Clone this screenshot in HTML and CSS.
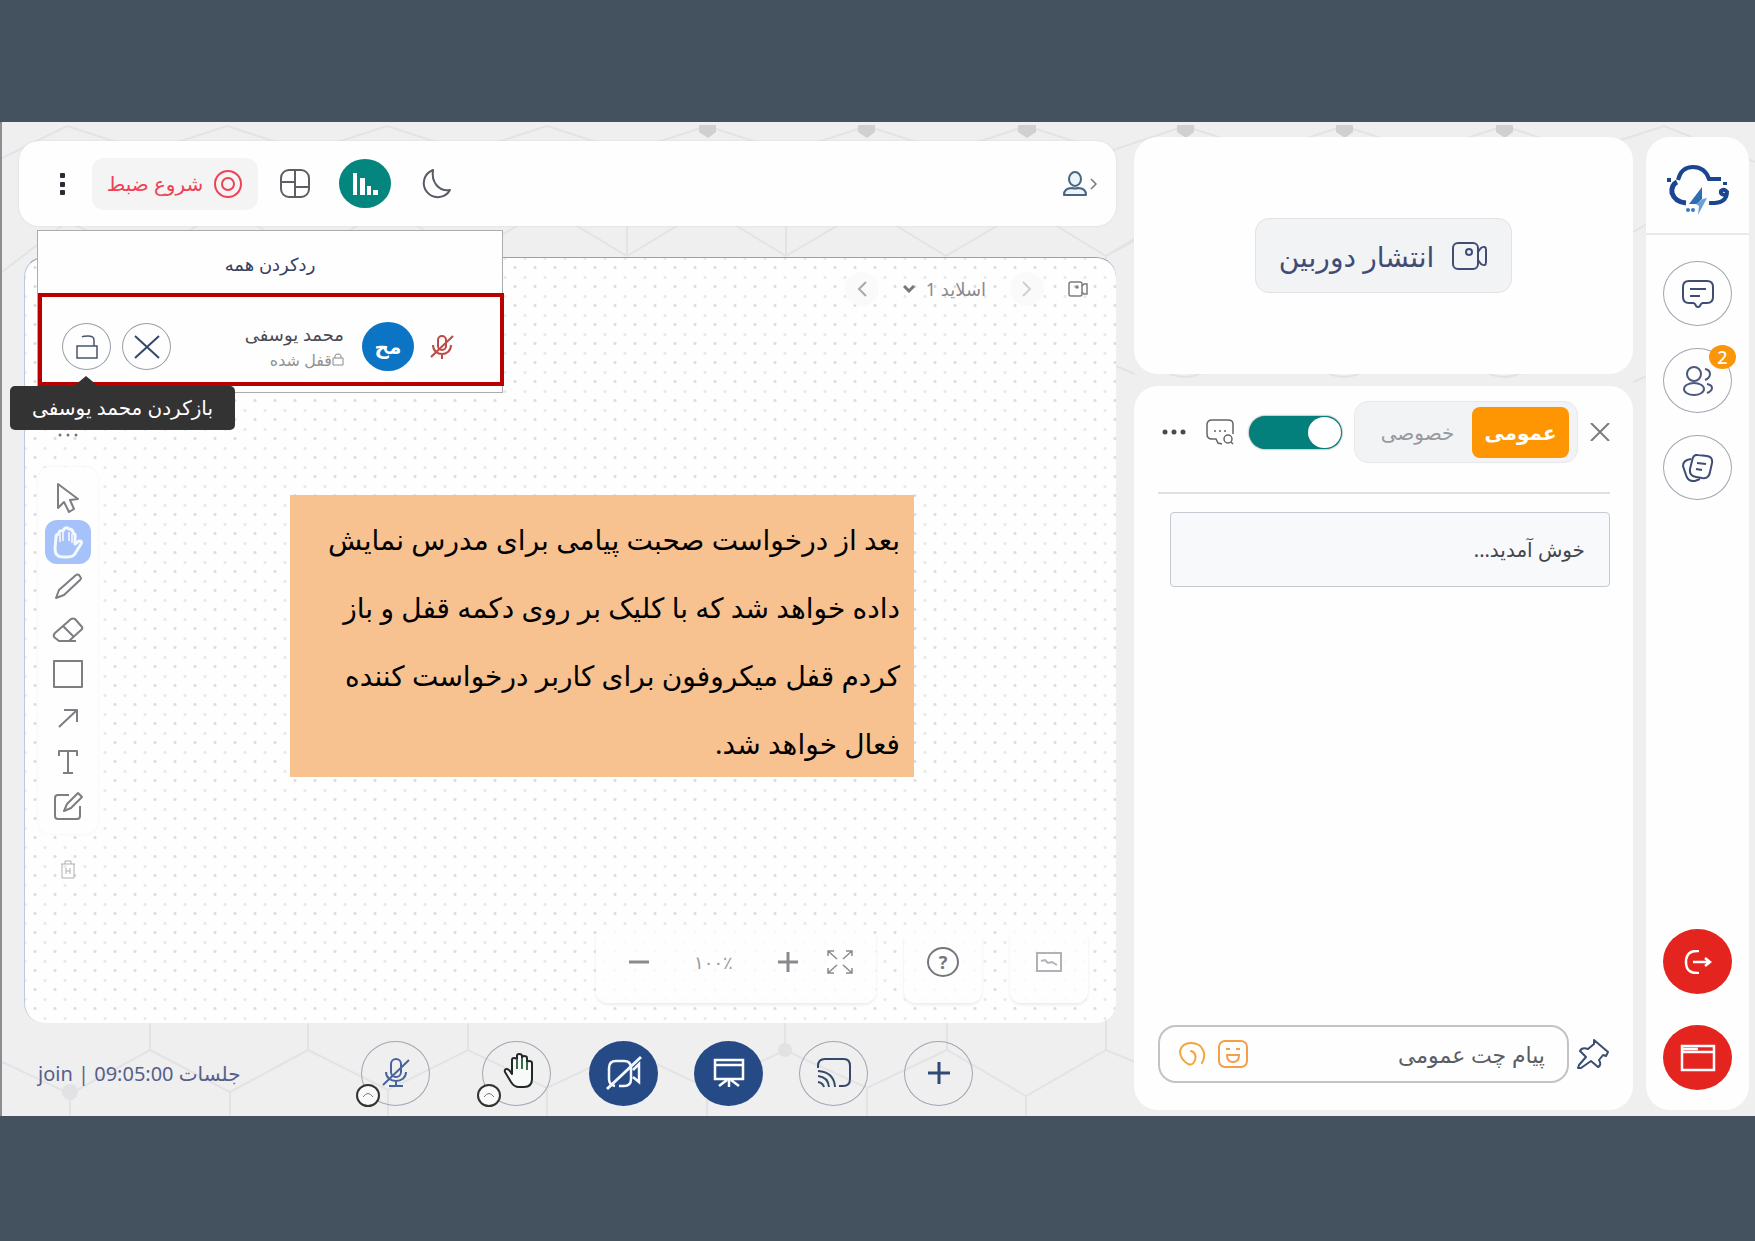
FILE: index.html
```html
<!DOCTYPE html>
<html lang="fa">
  <head>
    <meta charset="UTF-8" />
    <meta name="viewport" content="width=device-width, initial-scale=1.0" />
    <title>جلسات</title>
    <link rel="stylesheet" href="styles.css" />
  </head>
  <body>
    <div class="stage">
      <!-- hexagon backdrop -->
      <svg class="backdrop" viewBox="0 0 1753 994" preserveAspectRatio="none" aria-hidden="true">
        <path d="M0 36L65 4L145 30L225 4L305 30L385 4L465 30L545 4L625 30L705 4L785 30L865 4L945 30L1025 4L1105 30L1183 4L1262 30L1342 4L1422 30L1502 4L1582 30L1662 4L1753 40" />
        <path d="M0 150L65 100L145 134L225 86L305 134L385 86L465 134L545 86L625 134L705 86L784 134L865 86L944 134L1025 86L1104 134L1183 86M625 100V134M784 100V134M1104 134L1133 118M1104 240L1133 252M1104 134V240" />
        <path d="M0 940L68 972L148 928L228 970L306 928L386 968L466 928L545 966L625 928L705 966L783 928L865 966L945 928L1024 974L1104 928L1133 940M148 890V928M306 890V928M466 890V928M783 890V928M945 890V928M1104 870V928M68 972V994M228 970V994M386 968V994M545 966V994M705 966V994M865 966V994M1024 974V994" />
        <path d="M1133 220Q1183 290 1232 220M1292 220Q1342 290 1392 220M1452 220Q1502 290 1552 220M1631 110L1645 102M1631 260L1645 254" />
        <g class="nodes">
          <path d="M697 3h17v7l-8 6l-9-6zM856 3h17v7l-8 6l-9-6zM1016 3h18v7l-9 6l-9-6zM1175 3h17v7l-8 6l-9-6zM1334 3h17v7l-8 6l-9-6zM1494 3h17v7l-8 6l-9-6z" />
        </g>
        <g class="nodes pale">
          <circle cx="68" cy="970" r="8" />
          <circle cx="783" cy="928" r="7" />
        </g>
      </svg>

      <main class="main">
        <header class="topbar">
          <button class="icon-btn more-btn" aria-label="بیشتر">
            <svg width="8" height="24" viewBox="0 0 8 24" fill="#2b2b33">
              <rect x="2" y="1" width="5" height="5" rx="1" /><rect x="2" y="10" width="5" height="5" rx="1" /><rect x="2" y="18" width="5" height="5" rx="1" />
            </svg>
          </button>
          <button class="record-btn">
            <span>شروع ضبط</span>
            <svg width="30" height="30" viewBox="0 0 30 30" fill="none" stroke="#ee4256" stroke-width="2">
              <circle cx="15" cy="15" r="13" /><circle cx="15" cy="15" r="6" />
            </svg>
          </button>
          <button class="icon-btn layout-btn" aria-label="چیدمان">
            <svg width="32" height="30" viewBox="0 0 32 30" fill="none" stroke="#5d5f65" stroke-width="2">
              <rect x="2" y="1" width="28" height="27" rx="8" /><path d="M16 1V28M2 13H16M16 18H30" />
            </svg>
          </button>
          <button class="stats-btn" aria-label="آمار">
            <svg width="28" height="24" viewBox="0 0 28 24" fill="#fff">
              <rect x="2" y="1" width="4" height="22" /><rect x="9" y="6" width="5" height="17" /><rect x="16" y="14" width="4" height="9" /><rect x="22" y="18" width="5" height="5" />
            </svg>
          </button>
          <button class="icon-btn moon-btn" aria-label="حالت شب">
            <svg width="32" height="32" viewBox="0 0 32 32" fill="none" stroke="#575b64" stroke-width="2" stroke-linejoin="round">
              <path d="M13 2A14 14 0 1 0 30 22C19 24 11 14 13 2z" />
            </svg>
          </button>
          <button class="icon-btn user-btn" aria-label="کاربر">
            <svg width="36" height="28" viewBox="0 0 36 28" fill="none" stroke="#496582" stroke-width="2" stroke-linejoin="round">
              <ellipse cx="13" cy="9" rx="6" ry="7" fill="#edf5fc" />
              <path d="M2 25c0-5 3-7 8-7q3 1 6 0c5 0 8 2 8 7z" fill="#edf5fc" />
              <path d="M29 9l5 5l-5 5" stroke="#777" stroke-width="1.5" />
            </svg>
          </button>

          <!-- raise hand requests -->
          <div class="requests">
            <button class="reject-all">ردکردن همه</button>
            <div class="request-row">
              <button class="round-small" aria-label="بازکردن محمد یوسفی">
                <svg width="24" height="26" viewBox="0 0 24 26" fill="none" stroke="#4a5568" stroke-width="1.5">
                  <path d="M2 12h20v12H2zM19 12V6c0-3-2-4-6-4c-3 0-5 0-6 1" />
                </svg>
              </button>
              <button class="round-small" aria-label="رد">
                <svg width="26" height="24" viewBox="0 0 26 24" fill="none" stroke="#35456b" stroke-width="2">
                  <path d="M1 1L25 23M25 1L1 23" />
                </svg>
              </button>
              <div class="request-user">
                <span class="request-name">محمد یوسفی</span>
                <span class="request-state">
                  <svg width="12" height="13" viewBox="0 0 12 13" fill="none" stroke="#8a8a8a">
                    <path d="M1 5h10v7H1zM3 5V3q0-2 3-2t3 2v2" />
                  </svg>قفل شده</span>
              </div>
              <span class="avatar">مح</span>
              <svg class="muted-mic" width="24" height="26" viewBox="0 0 24 26" fill="none" stroke="#bd4a45" stroke-width="2">
                <rect x="8" y="2" width="8" height="14" rx="4" /><path d="M3 11c0 12 18 12 18 0M12 20v5M23 2L1 23" />
              </svg>
            </div>
            <div class="tooltip" role="tooltip">بازکردن محمد یوسفی</div>
          </div>
        </header>

        <section class="board">
          <div class="tools">
            <svg class="tool-dots" width="20" height="4" viewBox="0 0 20 4" fill="#777">
              <circle cx="2" cy="2" r="1.5" /><circle cx="10" cy="2" r="1.5" /><circle cx="18" cy="2" r="1.5" />
            </svg>
            <div class="tool-list">
              <button class="tool" aria-label="انتخاب">
                <svg width="30" height="32" viewBox="0 0 30 32"><path d="M5 2V26L11 20L16 30L21 27L17 18L25 17z" /></svg>
              </button>
              <button class="tool active" aria-label="جابجایی">
                <svg width="34" height="34" viewBox="0 0 34 34">
                  <path d="M5 12Q5 9 8 9V8Q8 5 12 6Q14 1 18 4Q22 4 22 8Q25 9 24 13V19L28 16Q32 16 30 19L25 27Q23 32 17 32H12Q4 32 4 24z" />
                  <path class="finger" d="M9 9V17M12 7V16M18 7V16M21 9V18" />
                </svg>
              </button>
              <button class="tool" aria-label="مداد">
                <svg width="30" height="30" viewBox="0 0 30 30"><path d="M3 27L6 19L23 4Q24 3 26 4L28 7Q28 8 27 9L11 24z" /></svg>
              </button>
              <button class="tool" aria-label="پاک کن">
                <svg width="34" height="30" viewBox="0 0 34 30"><path d="M25 26H8L3 22Q2 20 4 18L20 4Q22 3 24 4L31 12Q32 14 30 15L18 26M12 11L22 21" /></svg>
              </button>
              <button class="tool" aria-label="مستطیل">
                <svg width="32" height="30" viewBox="0 0 32 30"><path d="M2 2H30V28H2z" /></svg>
              </button>
              <button class="tool" aria-label="فلش">
                <svg width="26" height="26" viewBox="0 0 26 26"><path d="M4 22L22 5M9 5H22V17" /></svg>
              </button>
              <button class="tool" aria-label="متن">
                <svg width="26" height="28" viewBox="0 0 26 28"><path d="M4 8V3H22V8M13 3V25M8 25H18" /></svg>
              </button>
              <button class="tool" aria-label="یادداشت">
                <svg width="32" height="32" viewBox="0 0 32 32"><path d="M17 5H6Q3 5 3 8V26Q3 29 6 29H25Q28 29 28 26V16M12 21L15 14L26 3L30 7L19 18z" /></svg>
              </button>
            </div>
            <button class="tool trash" aria-label="حذف">
              <svg width="16" height="20" viewBox="0 0 16 20"><path d="M1 4H15M5 4V1H11V4M2 4V18H14V4M6 8V14M10 8V14M6 11H10" /></svg>
            </button>
          </div>

          <div class="board-side">
            <div class="slide-nav">
              <button class="icon-btn slide-arrow" aria-label="اسلاید قبلی">
                <svg width="10" height="16" viewBox="0 0 10 16" fill="none" stroke="#a9a9ad" stroke-width="2"><path d="M9 1L2 8L9 15" /></svg>
              </button>
              <label class="slide-pick">
                <svg width="12" height="8" viewBox="0 0 12 8" fill="none" stroke="#777" stroke-width="3"><path d="M1 1L6 6L11 1" /></svg>
                <select aria-label="اسلاید"><option>اسلاید 1</option></select>
              </label>
              <button class="icon-btn slide-arrow" aria-label="اسلاید بعدی">
                <svg width="10" height="16" viewBox="0 0 10 16" fill="none" stroke="#cfcfd3" stroke-width="2"><path d="M1 1L8 8L1 15" /></svg>
              </button>
              <button class="icon-btn" aria-label="دوربین">
                <svg width="20" height="16" viewBox="0 0 20 16" fill="none" stroke="#7c7c80" stroke-width="1.5">
                  <rect x="1" y="1" width="13" height="14" rx="2" /><path d="M14 5L16 3H19V13H16L14 11" /><circle cx="9" cy="6" r="1" />
                </svg>
              </button>
            </div>

            <div class="board-bottom">
              <div class="float-card zoom-card">
                <button class="icon-btn" aria-label="کوچک نمایی">
                  <svg width="22" height="20" viewBox="0 0 22 20" stroke="#8a8a8e" stroke-width="3"><path d="M1 10H21" /></svg>
                </button>
                <span class="zoom-value">۱۰۰٪</span>
                <button class="icon-btn" aria-label="بزرگ نمایی">
                  <svg width="22" height="20" viewBox="0 0 22 20" stroke="#8a8a8e" stroke-width="3"><path d="M1 10H21M11 0V20" /></svg>
                </button>
                <button class="icon-btn" aria-label="تمام صفحه">
                  <svg width="26" height="24" viewBox="0 0 26 24" fill="none" stroke="#8a8a8e" stroke-width="1.5">
                    <path d="M1 6V1H7M1 1L10 9M19 1H25V6M25 1L16 9M1 18V23H7M1 23L10 15M19 23H25V18M25 23L16 15" />
                  </svg>
                </button>
              </div>
              <button class="float-card" aria-label="راهنما"><span class="help-mark">?</span></button>
              <button class="float-card" aria-label="نقشه">
                <svg width="26" height="20" viewBox="0 0 26 20" fill="none" stroke="#b2b2b6" stroke-width="2"><path d="M1 1H25V19H1zM5 9L9 8L12 11L16 10L21 13" /></svg>
              </button>
            </div>
          </div>

          <p class="note" dir="rtl">
            بعد از درخواست صحبت پیامی برای مدرس نمایش<br />
            داده خواهد شد که با کلیک بر روی دکمه قفل و باز<br />
            کردم قفل میکروفون برای کاربر درخواست کننده<br />
            فعال خواهد شد.
          </p>
        </section>

        <footer class="bottombar">
          <span class="session" dir="ltr">join | 09:05:00 جلسات</span>
          <div class="actions">
            <span class="action-wrap">
              <button class="round" aria-label="میکروفون">
                <svg width="28" height="32" viewBox="0 0 28 32" fill="none" stroke="#46649b" stroke-width="2">
                  <rect x="9" y="2" width="10" height="18" rx="5" /><path d="M4 15c0 12 20 12 20 0M14 24v5M7 29h14M27 3L1 28" />
                </svg>
              </button>
              <button class="expand" aria-label="انتخاب میکروفون"><svg width="12" height="6" viewBox="0 0 12 6" fill="none" stroke="#777"><path d="M1 5Q6-2 11 5" /></svg></button>
            </span>
            <span class="action-wrap">
              <button class="round hand-btn" aria-label="بلند کردن دست">
                <svg width="34" height="36" viewBox="0 0 34 36" fill="#f8faf8" stroke="#22282a" stroke-width="2" stroke-linejoin="round">
                  <path d="M9 20V8q0-2 2-2q3 0 3 2V4q0-2 2-2q3 0 3 2v2q0-2 2-2q3 0 3 2v5q0-2 2-2q3 0 3 2v16q0 8-8 8h-5q-5 0-8-5L2 20q-1-3 2-3q2 0 5 5z" />
                  <path d="M14 7v10M19 6v11M24 10v8" stroke="#3c6a48" />
                </svg>
              </button>
              <button class="expand" aria-label="گزینه های دست"><svg width="12" height="6" viewBox="0 0 12 6" fill="none" stroke="#777"><path d="M1 5Q6-2 11 5" /></svg></button>
            </span>
            <button class="round filled" aria-label="دوربین خاموش">
              <svg width="36" height="36" viewBox="0 0 36 36" fill="none" stroke="#f5f8ff" stroke-width="3">
                <path d="M9 31Q3 30 3 24V13Q3 6 10 6H18Q25 6 25 13V24Q25 31 18 31H13M27 15L33 9V27L27 22" stroke-width="2.5" /><path d="M1 34L35 2" />
              </svg>
            </button>
            <button class="round filled" aria-label="ارائه">
              <svg width="32" height="30" viewBox="0 0 32 30" fill="none" stroke="#fff" stroke-width="2.5">
                <path d="M2 2H30V21H2zM2 7H30M16 21V29M14 22L6 28M18 22L26 28" />
              </svg>
            </button>
            <button class="round" aria-label="اشتراک صفحه">
              <svg width="36" height="32" viewBox="0 0 36 32" fill="none" stroke="#37496b" stroke-width="2">
                <path d="M2 11V9Q2 2 9 2H28Q34 2 34 9V22Q34 29 27 29H23M2 14Q18 15 19 30M2 19Q12 20 13 30M2 25Q7 26 8 30" />
              </svg>
            </button>
            <button class="round" aria-label="افزودن">
              <svg width="24" height="22" viewBox="0 0 24 22" stroke="#2f4a77" stroke-width="3"><path d="M1 11H23M12 0V22" /></svg>
            </button>
          </div>
        </footer>
      </main>

      <aside class="panels">
        <section class="card camera-card">
          <button class="camera-btn">
            <span>انتشار دوربین</span>
            <svg width="36" height="30" viewBox="0 0 36 30" fill="none" stroke="#414c74" stroke-width="2">
              <rect x="1" y="2" width="25" height="26" rx="5" /><path d="M26 11L29 7Q34 4 34 9V21Q34 26 29 23L26 19" /><circle cx="17" cy="11" r="3" />
            </svg>
          </button>
        </section>

        <section class="card chat-card">
          <div class="chat-head">
            <button class="icon-btn" aria-label="گزینه ها">
              <svg width="24" height="6" viewBox="0 0 24 6" fill="#4a4a50"><circle cx="3" cy="3" r="2.5" /><circle cx="12" cy="3" r="2.5" /><circle cx="21" cy="3" r="2.5" /></svg>
            </button>
            <button class="icon-btn search-btn" aria-label="جستجو">
              <svg width="28" height="26" viewBox="0 0 28 26" fill="none" stroke="#64646b" stroke-width="1.5">
                <path d="M27 15V5Q27 1 22 1H6Q1 1 1 6V15Q1 20 6 20H10L12 24L16 25M8 12H10M13 12H15M18 12H20" /><circle cx="22" cy="20" r="4" /><path d="M25 23L27 25" />
              </svg>
            </button>
            <input class="toggle" type="checkbox" checked aria-label="فعال بودن چت" />
            <div class="tabs">
              <button class="tab">خصوصی</button>
              <button class="tab selected">عمومی</button>
            </div>
            <button class="icon-btn close-btn" aria-label="بستن">
              <svg width="20" height="18" viewBox="0 0 20 18" stroke="#7b7b82" stroke-width="2"><path d="M1 0L19 18M19 0L1 18" /></svg>
            </button>
          </div>
          <p class="message" dir="rtl">خوش آمدید...</p>
          <div class="composer">
            <div class="composer-box">
              <button class="icon-btn" aria-label="پیوست">
                <svg width="28" height="26" viewBox="0 0 28 26" fill="none" stroke="#f3a53c" stroke-width="2" stroke-linecap="round">
                  <path d="M13 10Q19 12 17 19Q15 25 10 23Q2 18 2 10Q4 2 13 2Q22 2 25 9Q28 15 24 22" />
                </svg>
              </button>
              <button class="icon-btn" aria-label="ایموجی">
                <svg width="30" height="28" viewBox="0 0 30 28" fill="none" stroke="#f3a048" stroke-width="2">
                  <rect x="1" y="1" width="28" height="26" rx="6" /><path d="M8 9h4M18 9h4M9 15H21Q21 22 15 22T9 15z" />
                </svg>
              </button>
              <input class="chat-input" type="text" dir="rtl" placeholder="پیام چت عمومی" aria-label="پیام چت عمومی" />
            </div>
            <button class="icon-btn" aria-label="سنجاق">
              <svg width="34" height="32" viewBox="0 0 34 32" fill="none" stroke="#3c4d73" stroke-width="2" stroke-linejoin="round">
                <path d="M18 2L32 14L30 18L27 17L23 22Q26 27 22 29L15 23L5 30L2 30L3 27L10 19L4 13Q6 9 12 11L18 6z" />
              </svg>
            </button>
          </div>
        </section>
      </aside>

      <nav class="card sidebar">
        <a class="logo" href="#" aria-label="خانه">
          <svg width="64" height="54" viewBox="0 0 64 54" fill="none">
            <path d="M12 18Q15 5 27 5Q39 5 43 17L55 17" stroke="#1c4591" stroke-width="4" />
            <path d="M11 20Q5 23 6 31Q9 40 20 41" stroke="#1c4591" stroke-width="5" />
            <path d="M43 41Q61 42 61 30Q58 26 55 29Q54 33 60 33" stroke="#1c4591" stroke-width="4" />
            <path d="M1 16h4v4H1zM57 20h4v3H57z" fill="#1c4591" />
            <path d="M36 25L23 42H31L36 37z" fill="#2d6db4" />
            <path d="M37 37L30 42L33 44L32 53L41 36z" fill="#67a2d6" />
            <circle cx="22" cy="48" r="2" fill="#397bc0" /><circle cx="27" cy="48" r="2" fill="#397bc0" />
          </svg>
        </a>
        <div class="side-group">
          <button class="round" aria-label="چت">
            <svg width="32" height="30" viewBox="0 0 32 30" fill="none" stroke="#3f4d75" stroke-width="2">
              <path d="M7 2H25Q31 2 31 8V18Q31 24 25 24H21Q19 24 18 27Q16 29 14 27Q13 24 11 24H7Q1 24 1 18V8Q1 2 7 2zM8 10H24M8 17H18" />
            </svg>
          </button>
          <button class="round" aria-label="کاربران">
            <svg width="32" height="30" viewBox="0 0 32 30" fill="none" stroke="#4c587c" stroke-width="2">
              <circle cx="12" cy="8" r="7" /><ellipse cx="12" cy="23" rx="10" ry="6" /><path d="M23 3Q28 4 28 8T23 14M25 18Q30 19 30 22T25 27" />
            </svg>
            <span class="badge">2</span>
          </button>
          <button class="round" aria-label="فایل ها">
            <svg width="32" height="28" viewBox="0 0 32 28" fill="none" stroke="#3f4d75" stroke-width="2">
              <path d="M16 1L25 2Q31 3 30 9L28 18Q27 25 20 24L14 23Q7 22 8 15L10 7Q11 0 16 1zM9 5Q1 6 1 12L4 21Q6 28 13 27L18 25M15 9L24 10M14 15L20 16" />
            </svg>
          </button>
        </div>
        <div class="side-group side-exit">
          <button class="round danger" aria-label="خروج">
            <svg width="28" height="24" viewBox="0 0 28 24" fill="none" stroke="#fff" stroke-width="2.5"><path d="M15 1Q2 0 2 12T15 23M9 12H26M21 8L26 12L21 16" /></svg>
          </button>
          <button class="round danger" aria-label="پنجره">
            <svg width="36" height="28" viewBox="0 0 36 28" fill="none" stroke="#fff" stroke-width="2.5"><path d="M2 2H34V26H2zM2 8H34M2 5H18" /></svg>
          </button>
        </div>
      </nav>
    </div>
  </body>
</html>
```
FILE: styles.css
```css
* {
  box-sizing: border-box;
  margin: 0;
  font-family: "Noto Sans", "DejaVu Sans", sans-serif;
}
body {
  display: flex;
  flex-direction: column;
  min-height: 100vh;
  padding: 122px 0 125px;
  background-color: #44525f;
}
button {
  display: flex;
  align-items: center;
  justify-content: center;
  padding: 0;
  border: none;
  background: none;
  cursor: pointer;
}
svg {
  display: block;
  flex: none;
}
.stage {
  position: relative;
  display: flex;
  flex: 1;
  padding: 15px 6px 6px 17px;
  border-left: 2px solid #8b8d93;
  background-color: #efeff0;
}
.backdrop {
  position: absolute;
  top: 0;
  left: 0;
  width: 100%;
  height: 100%;
  fill: none;
  stroke: #e3e3e5;
  stroke-width: 2;
}
.nodes {
  fill: #d0d0d2;
  stroke: none;
}
.nodes.pale {
  fill: #e2e2e4;
}
.card {
  position: relative;
  background-color: #fefefe;
  border-radius: 24px;
}

/* main column */
.main {
  position: relative;
  display: flex;
  flex: 1;
  flex-direction: column;
  padding-top: 4px;
}
.topbar {
  position: relative;
  z-index: 2;
  display: flex;
  align-items: center;
  height: 85px;
  padding: 0 18px 0 39px;
  border-radius: 20px;
  background-color: #fefefe;
  box-shadow: 0 0 2px #d5d5d5;
}
.record-btn {
  gap: 10px;
  min-width: 166px;
  height: 52px;
  margin-left: 26px;
  border-radius: 12px;
  background-color: #f4f4f4;
  color: #ee4256;
  font-size: 20px;
}
.layout-btn {
  margin-left: 21px;
}
.stats-btn {
  width: 52px;
  height: 49px;
  margin-left: 28px;
  border-radius: 50%;
  background-color: #04857d;
}
.moon-btn {
  margin-left: 29px;
}
.user-btn {
  margin-left: auto;
}

/* requests menu */
.requests {
  position: absolute;
  top: 89px;
  left: 18px;
  width: 466px;
  padding-bottom: 6px;
  border: 1px solid #a9adb0;
  background-color: #fefefe;
}
.reject-all {
  width: 100%;
  height: 62px;
  padding-top: 4px;
  color: #3a3f5c;
  font-size: 18px;
}
.request-row {
  display: flex;
  align-items: center;
  height: 93px;
  margin-right: -2px;
  padding: 14px 46px 0 20px;
  border: 4px solid #b90000;
}
.round-small {
  width: 49px;
  height: 47px;
  margin-right: 11px;
  border: 1px solid #9a9fa6;
  border-radius: 50%;
}
.request-user {
  display: flex;
  flex: 1;
  flex-direction: column;
  align-items: flex-end;
  gap: 2px;
}
.request-name {
  color: #4a4a55;
  font-size: 18px;
  line-height: 24px;
}
.request-state {
  display: flex;
  flex-direction: row-reverse;
  align-items: center;
  color: #929292;
  font-size: 16px;
  line-height: 24px;
}
.avatar {
  display: flex;
  align-items: center;
  justify-content: center;
  width: 52px;
  height: 49px;
  margin: 0 16px 0 18px;
  border-radius: 50%;
  background-color: #0b74c4;
  color: #fff;
  font-size: 20px;
  font-weight: bold;
}
.tooltip {
  position: absolute;
  top: 155px;
  left: -28px;
  width: 225px;
  padding: 6px 0;
  border-radius: 5px;
  background-color: #333;
  color: #fff;
  font-size: 20px;
  font-weight: 500;
  line-height: 32px;
  text-align: center;
  white-space: nowrap;
}
.tooltip::before {
  content: "";
  position: absolute;
  top: -10px;
  left: 64px;
  border: 12px solid transparent;
  border-top: none;
  border-bottom: 10px solid #333;
}

/* white board */
.board {
  position: relative;
  display: flex;
  flex: 1;
  margin: 31px 0 0 5px;
  border-top: 1px solid #8da3b6;
  border-left: 1px solid #b9cbe0;
  border-radius: 20px;
  background-color: #fefefe;
  background-image: radial-gradient(circle, #dcdcdf 1px, transparent 2px),
    radial-gradient(circle, #e8e8ea 1px, transparent 2px);
  background-position: 0 0, 10px 10px;
  background-size: 20px 19px;
}
.tools {
  display: flex;
  flex-direction: column;
  align-items: center;
  width: 62px;
  margin-left: 12px;
  padding-top: 175px;
}
.tool-list {
  margin-top: 30px;
  padding: 9px 7px 6px;
  border-radius: 12px;
  background-color: #fefefe;
  box-shadow: 0 0 2px #ececee;
}
.tool {
  width: 46px;
  height: 44px;
}
.tool svg {
  fill: none;
  stroke: #7d7d82;
  stroke-width: 2;
  stroke-linejoin: round;
}
.tool.active {
  border-radius: 12px;
  background-color: #a5c3fa;
}
.tool.active svg {
  stroke: #f4f8ff;
  stroke-width: 3;
}
.tool.active .finger {
  stroke: #e9ecf8;
  stroke-width: 2;
}
.trash {
  margin-top: 14px;
}
.trash svg {
  stroke: #b0b0b4;
  stroke-width: 1;
}
.board-side {
  display: flex;
  flex: 1;
  flex-direction: column;
  justify-content: space-between;
  padding: 14px 28px 20px 0;
}
.slide-nav {
  display: flex;
  align-items: center;
  justify-content: flex-end;
  gap: 24px;
}
.slide-arrow {
  width: 34px;
  height: 34px;
  border-radius: 50%;
  background-color: #fafafb;
}
.slide-pick {
  display: flex;
  align-items: center;
  gap: 10px;
}
.slide-pick select {
  appearance: none;
  border: none;
  background: none;
  color: #8a8a8e;
  direction: rtl;
  font-size: 18px;
}
.board-bottom {
  display: flex;
  justify-content: flex-end;
  gap: 28px;
}
.float-card {
  width: 78px;
  height: 75px;
  padding-bottom: 8px;
  border-radius: 12px;
  background-color: rgba(254, 254, 254, 0.8);
  box-shadow: 0 2px 3px #ececee;
}
.zoom-card {
  display: flex;
  align-items: center;
  justify-content: space-between;
  width: 280px;
  padding: 0 23px 8px 32px;
}
.zoom-value {
  margin: 0 16px;
  color: #9a9a9e;
  font-size: 18px;
}
.help-mark {
  width: 32px;
  height: 30px;
  border: 2px solid #77777b;
  border-radius: 50%;
  color: #77777b;
  font-size: 18px;
  font-weight: bold;
  line-height: 26px;
}
.note {
  position: absolute;
  top: 237px;
  left: 265px;
  width: 624px;
  padding: 10px 14px 0 0;
  background-color: #f8c190;
  color: #000;
  font-size: 28px;
  line-height: 68px;
  white-space: nowrap;
}

/* bottom bar */
.bottombar {
  display: flex;
  align-items: center;
  height: 87px;
  padding: 13px 0 0 19px;
}
.session {
  color: #566089;
  font-size: 20px;
}
.actions {
  display: flex;
  align-items: center;
  gap: 36px;
  margin: 0 143px 0 auto;
}
.action-wrap {
  position: relative;
  margin-right: 16px;
}
.action-wrap + .action-wrap {
  margin-right: 2px;
}
.round {
  position: relative;
  width: 69px;
  height: 65px;
  border: 1px solid #a3a5b2;
  border-radius: 50%;
}
.round.filled {
  border: none;
  background-color: #254a86;
}
.hand-btn {
  padding: 0 0 6px 6px;
}
.expand {
  position: absolute;
  bottom: -1px;
  left: -5px;
  width: 24px;
  height: 23px;
  border: 2px solid #333;
  border-radius: 50%;
  background-color: #fafafa;
}

/* camera and chat */
.panels {
  display: flex;
  flex-direction: column;
  gap: 12px;
  width: 499px;
  margin: 0 13px 0 18px;
}
.camera-card {
  display: flex;
  align-items: center;
  justify-content: center;
  height: 237px;
}
.camera-btn {
  gap: 18px;
  width: 257px;
  height: 75px;
  border: 1px solid #e2e2e6;
  border-radius: 14px;
  background-color: #f2f3f5;
  color: #414c74;
  font-size: 28px;
}
.chat-card {
  display: flex;
  flex: 1;
  flex-direction: column;
  padding: 16px 23px 27px 24px;
}
.chat-head {
  display: flex;
  align-items: center;
  height: 92px;
  padding: 0 0 30px 4px;
  border-bottom: 2px solid #e1e1e3;
}
.search-btn {
  margin: 0 15px 0 20px;
}
.toggle {
  appearance: none;
  width: 93px;
  height: 33px;
  padding: 1px;
  border-radius: 17px;
  background-color: #04807c;
  box-shadow: 0 0 2px #555;
}
.toggle::after {
  content: "";
  display: block;
  width: 33px;
  height: 31px;
  margin-left: auto;
  border-radius: 50%;
  background-color: #fff;
}
.tabs {
  display: flex;
  align-items: center;
  width: 224px;
  height: 62px;
  margin-left: 12px;
  padding: 0 8px;
  border: 1px solid #e8e8eb;
  border-radius: 14px;
  background-color: #f2f3f5;
}
.tab {
  flex: 1;
  height: 51px;
  border-radius: 8px;
  color: #98989f;
  font-size: 20px;
}
.tab.selected {
  flex: none;
  width: 97px;
  background-color: #fe9503;
  color: #fff;
  font-weight: bold;
}
.close-btn {
  margin-left: auto;
}
.message {
  margin: 18px 0 0 12px;
  padding: 21px 24px;
  border: 1px solid #c5c9d2;
  border-radius: 4px;
  background-color: #f8f9fb;
  color: #45454c;
  font-size: 20px;
  line-height: 31px;
}
.composer {
  display: flex;
  align-items: center;
  justify-content: space-between;
  margin-top: auto;
}
.composer-box {
  display: flex;
  align-items: center;
  gap: 12px;
  width: 411px;
  height: 58px;
  padding: 0 20px 0 18px;
  border: 2px solid #c3c3c7;
  border-radius: 18px;
}
.chat-input {
  flex: 1;
  min-width: 0;
  border: none;
  outline: none;
  background: none;
  font-size: 22px;
}
.chat-input::placeholder {
  color: #5c5c63;
  opacity: 1;
}

/* side rail */
.sidebar {
  display: flex;
  flex-direction: column;
  width: 103px;
  padding-bottom: 20px;
}
.logo {
  display: flex;
  align-items: center;
  justify-content: center;
  height: 98px;
  padding-top: 8px;
  border-bottom: 2px solid #e9e9eb;
}
.side-group {
  display: flex;
  flex-direction: column;
  align-items: center;
  gap: 22px;
  padding-top: 26px;
}
.side-exit {
  gap: 31px;
  margin-top: auto;
}
.badge {
  position: absolute;
  top: -4px;
  right: -5px;
  width: 27px;
  height: 24px;
  border-radius: 50%;
  background-color: #fb9608;
  color: #fff;
  font-size: 18px;
  font-weight: 500;
  line-height: 24px;
}
.round.danger {
  border: none;
  background-color: #e3241f;
}
```
